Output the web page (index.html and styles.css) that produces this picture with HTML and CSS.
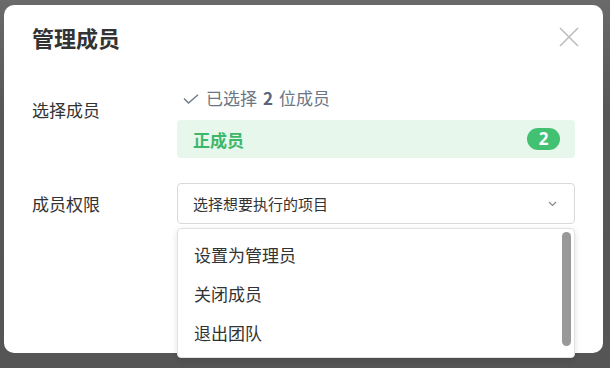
FILE: index.html
```html
<!DOCTYPE html>
<html lang="zh-CN">

<head>
    <meta charset="utf-8">
    <title>管理成员</title>
    <link rel="stylesheet" href="styles.css">
</head>

<body>
    <!-- Manage members dialog -->
    <div class="modal">
        <div class="modal-header">
            <h2 class="modal-title">管理成员</h2>
            <button class="close-btn" aria-label="关闭">
                <svg width="20" height="20" viewBox="0 0 20 20">
                    <path d="M1 1 L19 19 M19 1 L1 19" stroke="#bdbdbd" stroke-width="1.6" fill="none" />
                </svg>
            </button>
        </div>

        <div class="modal-body">
            <!-- Selected members -->
            <div class="form-row">
                <label class="form-label label-top">选择成员</label>
                <div class="form-field">
                    <p class="selected-info">
                        <svg class="check" width="16" height="10" viewBox="0 0 16 10">
                            <path d="M1 4.5 L5.5 9 L15 0.8" stroke="#6b7785" stroke-width="1.3" fill="none" />
                        </svg>
                        已选择 <b>2</b> 位成员
                    </p>
                    <div class="member-group">
                        <span class="group-name">正成员</span>
                        <span class="group-count">2</span>
                    </div>
                </div>
            </div>

            <!-- Permission select -->
            <div class="form-row row-center">
                <label class="form-label">成员权限</label>
                <div class="form-field">
                    <div class="select">
                        <div class="select-box">
                            <span>选择想要执行的项目</span>
                            <svg width="9" height="6" viewBox="0 0 9 6">
                                <path d="M1 1 L4.5 4.5 L8 1" stroke="#888" stroke-width="1.2" fill="none" />
                            </svg>
                        </div>
                        <ul class="select-menu">
                            <li>设置为管理员</li>
                            <li>关闭成员</li>
                            <li>退出团队</li>
                            <div class="scrollbar"></div>
                        </ul>
                    </div>
                </div>
            </div>
        </div>
    </div>
</body>

</html>
```

FILE: styles.css
```css
/* Reset */
* {
    margin: 0;
    padding: 0;
    box-sizing: border-box;
}

body {
    font-family: "Noto Sans CJK SC", "Noto Sans", sans-serif;
    background: linear-gradient(#6a6a6a, #575757 30%, #555555);
    color: #333333;
    height: 368px;
    overflow: hidden;
    padding: 5px 0 0 4px;
}

/* Dialog */
.modal {
    width: 599px;
    height: 348px;
    background-color: #ffffff;
    border-radius: 10px;
}

.modal-header {
    display: flex;
    justify-content: space-between;
    align-items: center;
    padding: 17px 24px 0 28px;
}

.modal-title {
    font-size: 22px;
    line-height: 30px;
    font-weight: 700;
    color: #333333;
}

.close-btn {
    background: none;
    border: none;
    width: 20px;
    height: 20px;
    display: flex;
}

.modal-body {
    padding: 34px 28px 0 28px;
}

/* Form rows */
.form-row {
    display: flex;
    margin-bottom: 25px;
}

.row-center {
    align-items: center;
}

.form-label {
    width: 145px;
    flex-shrink: 0;
    font-size: 17px;
    line-height: 24px;
}

.label-top {
    padding-top: 12px;
}

.form-field {
    flex: 1;
}

.selected-info {
    display: flex;
    align-items: center;
    font-size: 17px;
    line-height: 24px;
    color: #6b7785;
    padding-left: 6px;
}

.selected-info .check {
    margin-right: 7px;
    margin-top: 2px;
}

.selected-info b {
    color: #5a6676;
    margin: 0 6px;
}

/* Member group pill */
.member-group {
    margin-top: 10px;
    height: 38px;
    background-color: #e7f7ec;
    border-radius: 4px;
    display: flex;
    align-items: center;
    justify-content: space-between;
    padding: 0 15px 0 16px;
}

.group-name {
    font-size: 17px;
    font-weight: 700;
    color: #3db86b;
}

.group-count {
    min-width: 33px;
    height: 22px;
    border-radius: 11px;
    background-color: #42c172;
    color: #ffffff;
    font-family: "Noto Sans", sans-serif;
    font-weight: 700;
    font-size: 17px;
    line-height: 22px;
    text-align: center;
}

/* Select */
.select {
    position: relative;
}

.select-box {
    height: 41px;
    border: 1px solid #d9d9d9;
    border-radius: 4px;
    display: flex;
    align-items: center;
    justify-content: space-between;
    padding: 0 17px 0 15px;
    font-size: 15px;
    color: #333333;
}

.select-menu {
    position: absolute;
    top: calc(100% + 4px);
    left: 0;
    right: 0;
    height: 130px;
    list-style-type: none;
    background-color: #ffffff;
    border: 1px solid #e2e2e2;
    border-radius: 4px;
    box-shadow: 0 2px 6px rgba(0, 0, 0, 0.12);
    padding: 6px 0 5px;
}

.select-menu li {
    height: 39px;
    line-height: 39px;
    padding-left: 16px;
    font-size: 17px;
    color: #333333;
}

.scrollbar {
    position: absolute;
    top: 3px;
    right: 3px;
    width: 9px;
    height: 114px;
    border-radius: 5px;
    background-color: #999999;
}
```
